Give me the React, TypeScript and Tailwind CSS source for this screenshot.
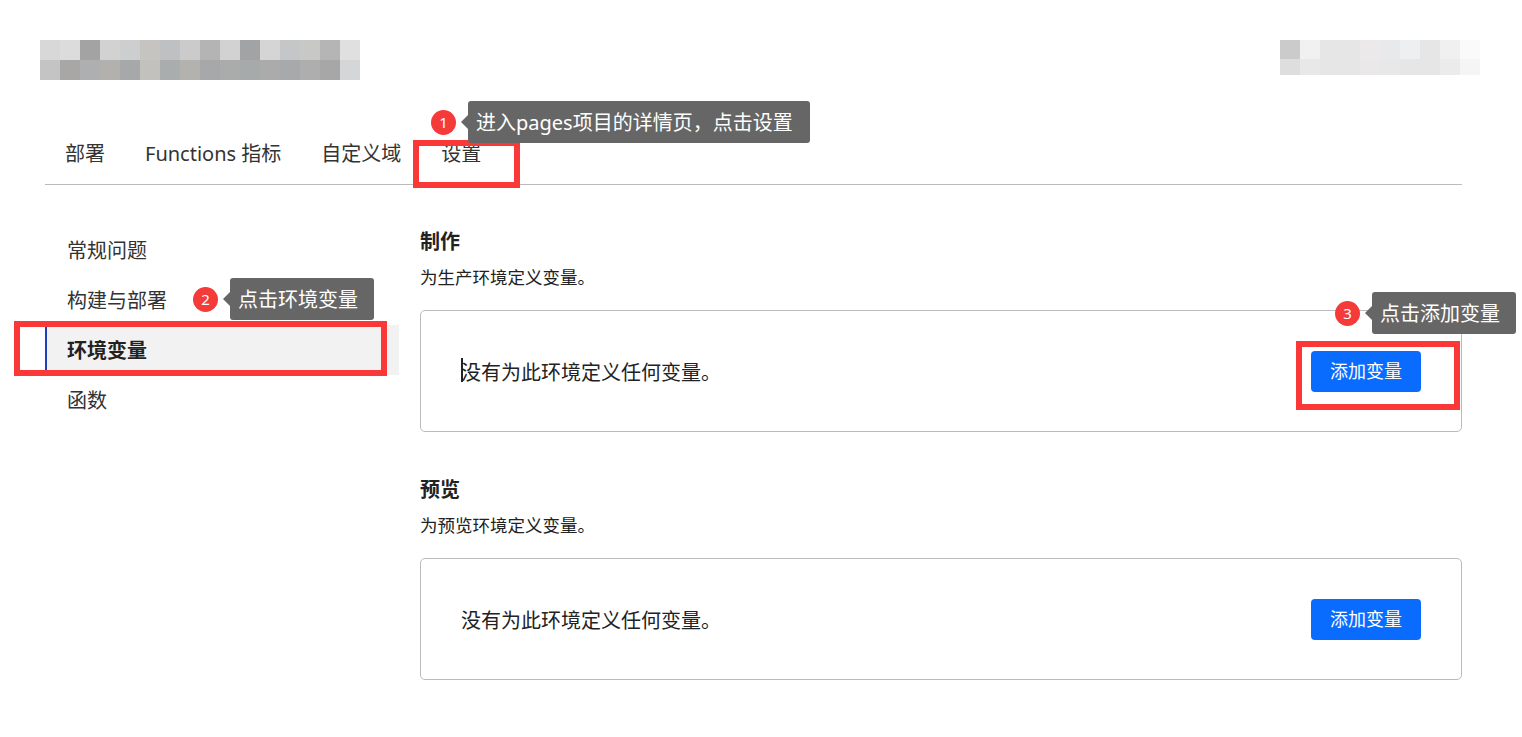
import React from "react";

const logoRow1 = [
  "bg-[#d8d8d8]", "bg-[#dcdcdc]", "bg-[#a3a3a3]", "bg-[#d2d2d2]", "bg-[#cdcecf]", "bg-[#c6c4c1]", "bg-[#bfc0c1]", "bg-[#cbcbcb]",
  "bg-[#b4b4b4]", "bg-[#d2d2d2]", "bg-[#a2a3a4]", "bg-[#d5d5d5]", "bg-[#c5c6c7]", "bg-[#c8c8c6]", "bg-[#b5b5b5]", "bg-[#e0e0e0]",
];
const logoRow2 = [
  "bg-[#c4c4c4]", "bg-[#a8a7a5]", "bg-[#aeafb0]", "bg-[#b2b1ae]", "bg-[#a7a8a9]", "bg-[#c2c1bd]", "bg-[#a9adae]", "bg-[#b3b2ae]",
  "bg-[#a7a8a9]", "bg-[#aaabab]", "bg-[#a6aaab]", "bg-[#ababab]", "bg-[#a8a9aa]", "bg-[#aeaeae]", "bg-[#a7a7a7]", "bg-[#d5d6d7]",
];
const userRow1 = [
  "bg-[#cbcbcb]", "bg-[#f1f1f1]", "bg-[#e6e6e6]", "bg-[#e6e6e6]", "bg-[#ebe9e9]", "bg-[#e8e9ea]", "bg-[#eeeff0]", "bg-[#e6e6e6]", "bg-[#f0f0f0]", "bg-[#fafafa]",
];
const userRow2 = [
  "bg-[#dedede]", "bg-[#e8e8e8]", "bg-[#e6e6e6]", "bg-[#e6e6e6]", "bg-[#eae8e8]", "bg-[#e8e8e8]", "bg-[#e6e6e6]", "bg-[#e6e6e6]", "bg-[#ebebeb]", "bg-[#f5f5f5]",
];

function Annotation({ n, text, boxW, className }: { n: string; text: string; boxW: string; className: string }) {
  return (
    <div className={"absolute flex items-center " + className}>
      <div className="w-[25px] h-[25px] rounded-full bg-[#f53a3a] text-white text-[15px] leading-none flex items-center justify-center">
        {n}
      </div>
      <div className="ml-[5px] w-0 h-0 border-y-[7px] border-y-transparent border-r-[7px] border-r-[#666666]" />
      <div className={"h-[42px] bg-[#666666] rounded-[3px] text-white text-[20px] flex items-center pl-[8px] pt-[1px] whitespace-nowrap " + boxW}>
        {text}
      </div>
    </div>
  );
}

function EnvCard({ cursor }: { cursor?: boolean }) {
  return (
    <div className="mt-[21px] h-[122px] border border-[#bbbbbb] rounded-[5px] flex items-center justify-between pl-[40px] pr-[40px]">
      <span className="relative text-[20px] text-[#222] pt-[3px]">
        {cursor && <span className="absolute left-0 top-[3px] w-[2px] h-[24px] bg-[#222]" />}
        没有为此环境定义任何变量。
      </span>
      <button className="w-[110px] h-[41px] rounded-[4px] bg-[#0a6cff] text-white text-[18px] flex items-center justify-center pt-[1px]">
        添加变量
      </button>
    </div>
  );
}

export default function App() {
  return (
    <div className="relative min-h-screen bg-white text-[#222] font-['Noto_Sans','Noto_Sans_CJK_SC',sans-serif]">
      {/* header */}
      <div className="pt-[40px] pl-[40px] pr-[42px] flex justify-between">
        <div className="flex flex-col blur-[0.6px]">
          <div className="flex">
            {logoRow1.map((c, i) => (
              <div key={i} className={"w-[20px] h-[20px] " + c} />
            ))}
          </div>
          <div className="flex">
            {logoRow2.map((c, i) => (
              <div key={i} className={"w-[20px] h-[20px] " + c} />
            ))}
          </div>
        </div>
        <div className="flex flex-col blur-[0.6px]">
          <div className="flex">
            {userRow1.map((c, i) => (
              <div key={i} className={"w-[20px] h-[19px] " + c} />
            ))}
          </div>
          <div className="flex">
            {userRow2.map((c, i) => (
              <div key={i} className={"w-[20px] h-[16px] " + c} />
            ))}
          </div>
        </div>
      </div>

      {/* tabs */}
      <div className="mt-[44px] ml-[45px] mr-[60px] h-[61px] border-b border-[#bbbbbb] flex items-center text-[20px] text-[#333]">
        <div className="px-5">部署</div>
        <div className="px-5">Functions 指标</div>
        <div className="px-5">自定义域</div>
        <div className="px-5">设置</div>
      </div>

      {/* body */}
      <div className="ml-[45px] mr-[60px] pt-[40px] flex">
        <div className="w-[354px] shrink-0 text-[20px] text-[#333]">
          <div className="h-[50px] flex items-center pl-[22px] pt-[2px]">常规问题</div>
          <div className="h-[50px] flex items-center pl-[22px] pt-[2px]">构建与部署</div>
          <div className="h-[50px] flex items-center pl-[20px] pt-[2px] bg-[#f2f2f2] border-l-2 border-[#1d3fbb] font-bold text-[#222]">环境变量</div>
          <div className="h-[50px] flex items-center pl-[22px] pt-[2px]">函数</div>
        </div>
        <div className="ml-[21px] flex-1 pt-[3px]">
          <div className="text-[20px] leading-[28px] font-bold">制作</div>
          <div className="mt-[9px] text-[17.5px] leading-[24px] text-[#222]">为生产环境定义变量。</div>
          <EnvCard cursor />
          <div className="mt-[44px] text-[20px] leading-[28px] font-bold">预览</div>
          <div className="mt-[9px] text-[17.5px] leading-[24px] text-[#222]">为预览环境定义变量。</div>
          <EnvCard />
        </div>
      </div>

      {/* red highlight boxes */}
      <div className="absolute left-[413px] top-[140px] w-[107px] h-[48px] border-[6px] border-[#fb3838]" />
      <div className="absolute left-[14px] top-[321px] w-[373px] h-[55px] border-[6px] border-[#fb3838]" />
      <div className="absolute left-[1296px] top-[341px] w-[164px] h-[69px] border-[6px] border-[#fb3838]" />

      {/* annotations */}
      <Annotation n="1" text="进入pages项目的详情页，点击设置" boxW="w-[342px]" className="left-[431px] top-[101px]" />
      <Annotation n="2" text="点击环境变量" boxW="w-[144px]" className="left-[193px] top-[278px]" />
      <Annotation n="3" text="点击添加变量" boxW="w-[144px]" className="left-[1335px] top-[292px]" />
    </div>
  );
}
